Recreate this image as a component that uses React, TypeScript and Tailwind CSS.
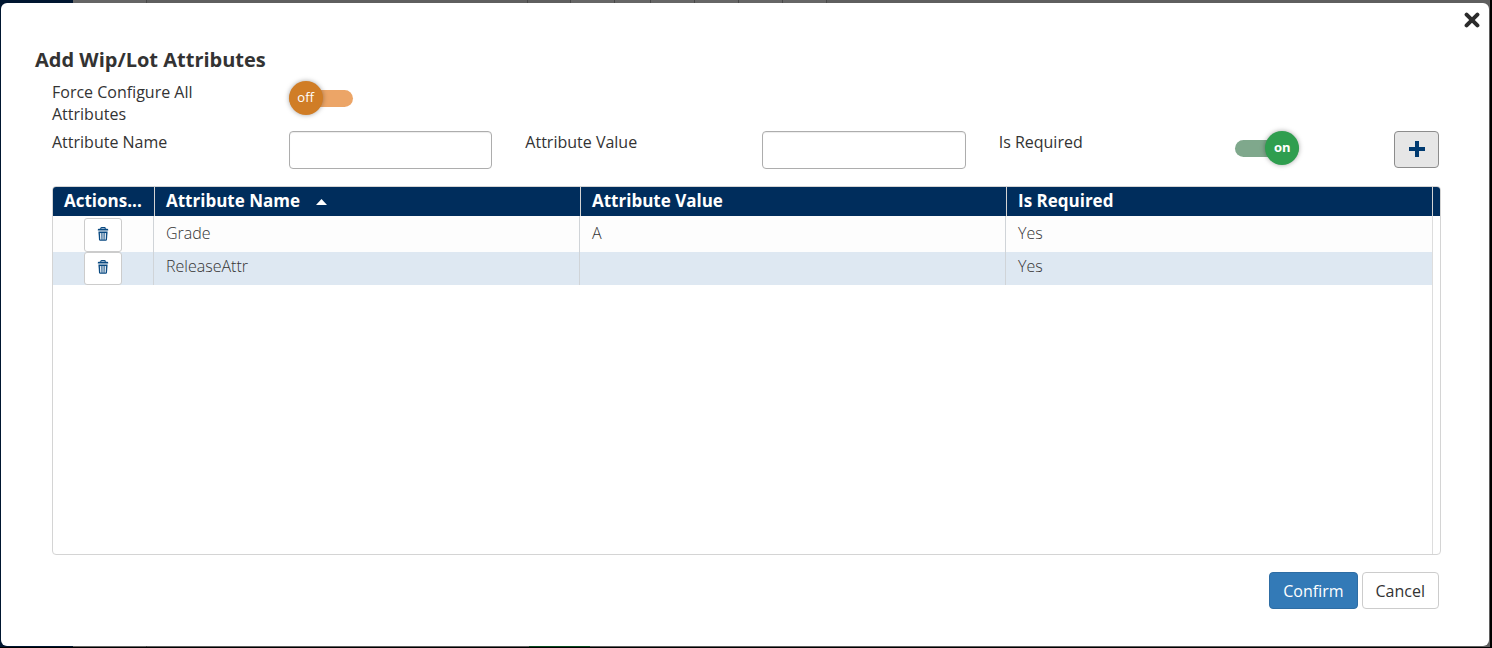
import { useState } from "react";

type Attribute = { name: string; value: string; required: string };

const initialRows: Attribute[] = [
  { name: "Grade", value: "A", required: "Yes" },
  { name: "ReleaseAttr", value: "", required: "Yes" },
];

function TrashIcon() {
  return (
    <svg width="12" height="14" viewBox="0 0 12 14" fill="none" aria-hidden="true">
      <path d="M3.8 2V1.3Q3.8 .6 4.5 .6H7.5Q8.2 .6 8.2 1.3V2" stroke="#0a4a82" strokeWidth="1.1" />
      <path d="M.8 2.8Q.8 1.8 1.8 1.8H10.2Q11.2 1.8 11.2 2.8V3.6H.8Z" fill="#0a4a82" />
      <path d="M1.4 4.6H10.6L10 12.6Q9.9 13.8 8.8 13.8H3.2Q2.1 13.8 2 12.6Z" fill="#0a4a82" />
      <path d="M3.4 6L3.7 12.6M5.1 6V12.6M6.9 6V12.6M8.6 6L8.3 12.6" stroke="#fff" strokeWidth=".9" />
    </svg>
  );
}

function CloseIcon() {
  return (
    <svg width="16" height="16" viewBox="0 0 16 16" aria-hidden="true">
      <path d="M2.6 2.6L13.4 13.4M13.4 2.6L2.6 13.4" stroke="#2b2b2b" strokeWidth="4" strokeLinecap="round" />
    </svg>
  );
}

function PlusIcon() {
  return (
    <svg width="16" height="16" viewBox="0 0 16 16" aria-hidden="true">
      <path d="M8 0V16M0 8H16" stroke="#003a70" strokeWidth="4" />
    </svg>
  );
}

function Toggle({ id, checked, onChange }: { id: string; checked: boolean; onChange: (v: boolean) => void }) {
  return (
    <label className="relative flex h-[34px] w-16 cursor-pointer items-center">
      <input
        id={id}
        type="checkbox"
        role="switch"
        className="sr-only"
        checked={checked}
        onChange={(e) => onChange(e.target.checked)}
      />
      <span className={checked ? "h-[17px] w-full rounded-full bg-[#7fa88c]" : "h-[17px] w-full rounded-full bg-[#eca567]"} />
      <span
        className={
          checked
            ? "absolute right-0 flex size-[34px] items-center justify-center rounded-full bg-[#2f9e4f] pb-0.5 text-[13px] font-bold text-white shadow-[0_0_5px_rgba(0,0,0,0.35)]"
            : "absolute left-0 flex size-[34px] items-center justify-center rounded-full bg-[#d07d26] pb-0.5 text-[13px] font-medium text-white shadow-[0_0_5px_rgba(0,0,0,0.35)]"
        }
      >
        {checked ? "on" : "off"}
      </span>
    </label>
  );
}

function Backdrop() {
  return (
    <div className="absolute inset-0 flex flex-col bg-black" aria-hidden="true">
      <div className="mr-0.5 mb-px flex flex-1 bg-[#5f5f5f]">
        <div className="w-[73px] bg-[#001630]" />
        <div className="w-[74px] border-r border-[#484848] bg-[#656565]" />
        <div className="flex w-[680px] items-start justify-end">
          <div className="h-1 w-11 border-x border-[#484848] bg-[#5f5f5f]" />
          <div className="h-1 w-11 border-r border-[#484848] bg-[#666]" />
          <div className="h-1 w-9 border-r border-[#484848] bg-[#666]" />
          <div className="h-1 w-11 border-r border-[#484848] bg-[#666]" />
          <div className="h-1 w-11 border-r border-[#484848] bg-[#666]" />
          <div className="h-1 w-11 border-r border-[#484848] bg-[#666]" />
          <div className="h-1 w-11 border-r border-[#484848] bg-[#666]" />
        </div>
      </div>
      <div className="absolute bottom-px left-[529px] h-1 w-[61px] bg-[#0b4a20]" />
    </div>
  );
}

export default function App() {
  const [rows, setRows] = useState(initialRows);
  const [force, setForce] = useState(false);
  const [required, setRequired] = useState(true);
  const [name, setName] = useState("");
  const [value, setValue] = useState("");

  const add = () => {
    if (!name) return;
    setRows([...rows, { name, value, required: required ? "Yes" : "No" }]);
    setName("");
    setValue("");
  };

  const field =
    "h-[38px] w-full rounded border border-[#adadad] bg-white px-3 shadow-[inset_0_1px_1px_rgba(0,0,0,0.075)] outline-none focus:border-[#66afe9]";
  const th = "h-[29px] overflow-hidden text-ellipsis whitespace-nowrap border-l border-[#d4d4d4] pb-px pl-[11px] text-left text-[17px] leading-7 font-bold";
  const td = "pl-3 align-top text-base leading-[29px] font-light";

  return (
    <div className="relative min-h-screen pt-[3px] pr-[3px] pb-0.5 pl-px font-['Open_Sans',sans-serif] text-base text-[#333]">
      <Backdrop />
      <main
        role="dialog"
        aria-labelledby="dialog-title"
        className="relative min-h-[calc(100vh-5px)] rounded-md bg-white pt-[43px] pr-[50px] pb-[37px] pl-[51px]"
      >
        <button type="button" aria-label="Close" className="absolute top-[9px] right-[9px] cursor-pointer">
          <CloseIcon />
        </button>

        <h1 id="dialog-title" className="-ml-[17px] pb-[7px] text-xl leading-7 font-bold">
          Add Wip/Lot Attributes
        </h1>

        <div className="grid grid-cols-6 gap-x-[33px] gap-y-1.5 leading-[22px] font-medium">
          <label htmlFor="force">Force Configure All Attributes</label>
          <div className="col-span-5">
            <Toggle id="force" checked={force} onChange={setForce} />
          </div>
          <label htmlFor="attr-name">Attribute Name</label>
          <input id="attr-name" type="text" className={field} value={name} onChange={(e) => setName(e.target.value)} />
          <label htmlFor="attr-value">Attribute Value</label>
          <input id="attr-value" type="text" className={field} value={value} onChange={(e) => setValue(e.target.value)} />
          <label htmlFor="required">Is Required</label>
          <div className="flex items-start justify-between">
            <Toggle id="required" checked={required} onChange={setRequired} />
            <button
              type="button"
              aria-label="Add attribute"
              onClick={add}
              className="flex h-[37px] w-[45px] cursor-pointer items-center justify-center rounded border border-[#8c8c8c] bg-[#e6e6e6] pb-px"
            >
              <PlusIcon />
            </button>
          </div>
        </div>

        <div className="mt-[17px] -mr-0.5 overflow-hidden rounded border border-[#d4d4d4]">
          <table className="h-[367px] w-full table-fixed border-separate border-spacing-0">
            <colgroup>
              <col className="w-[101px]" />
              <col />
              <col />
              <col />
              <col className="w-2" />
            </colgroup>
            <thead className="bg-[#002d5c] text-white">
              <tr>
                <th scope="col" className="h-[29px] overflow-hidden pb-px pl-[11px] text-left text-[17px] leading-7 font-bold text-ellipsis whitespace-nowrap">
                  Actions...
                </th>
                <th scope="col" aria-sort="ascending" className={th}>
                  <span className="flex items-center gap-4">
                    Attribute Name
                    <svg width="11" height="6" viewBox="0 0 11 6" className="mt-0.5" aria-hidden="true">
                      <path d="M0 6L5.5 0L11 6Z" fill="#fff" />
                    </svg>
                  </span>
                </th>
                <th scope="col" className={th}>Attribute Value</th>
                <th scope="col" className={th}>Is Required</th>
                <td className="border-l border-[#d4d4d4]" />
              </tr>
            </thead>
            <tbody>
              {rows.map((row, i) => {
                const cell = td + (i === 0 ? " pt-[3px]" : "");
                return (
                  <tr key={row.name + i} className={i % 2 ? "h-[33px] bg-[#dee8f2]" : "h-9 bg-[#fdfdfd]"}>
                    <td className="border-r border-[#d0d4d8] p-0 align-bottom">
                      <button
                        type="button"
                        aria-label={"Delete " + row.name}
                        onClick={() => setRows(rows.filter((_, n) => n !== i))}
                        className={
                          (i % 2 ? "h-[33px]" : "h-[34px]") +
                          " mx-auto flex w-[38px] cursor-pointer items-center justify-center rounded-[3px] border border-[#ccc] bg-white pb-[3px]"
                        }
                      >
                        <TrashIcon />
                      </button>
                    </td>
                    <td className={cell + " border-r border-[#d0d4d8]"}>{row.name}</td>
                    <td className={cell + " border-r border-[#d0d4d8]"}>{row.value}</td>
                    <td className={cell}>{row.required}</td>
                    <td className="border-l border-[#ddd] bg-white" />
                  </tr>
                );
              })}
              <tr>
                <td colSpan={4} />
                <td className="border-l border-[#ddd]" />
              </tr>
            </tbody>
          </table>
        </div>

        <div className="mt-[17px] flex justify-end gap-1">
          <button type="button" className="h-[37px] cursor-pointer rounded border border-[#2e6da4] bg-[#337ab7] px-[13px] font-medium text-white">
            Confirm
          </button>
          <button type="button" className="h-[37px] cursor-pointer rounded border border-[#ccc] bg-white px-[13px]">
            Cancel
          </button>
        </div>
      </main>
    </div>
  );
}
